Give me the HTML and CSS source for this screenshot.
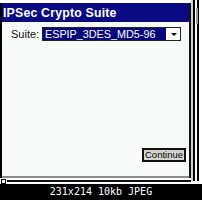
FILE: index.html
```html
<!DOCTYPE html>
<html>
<head>
<meta charset="utf-8">
<link rel="stylesheet" href="styles.css">
</head>
<body>
<div class="screen">
  <div class="top">
    <div class="left">
      <div class="dialog">
        <div class="title">IPSec Crypto Suite</div>
        <div class="content">
          <div class="row">
            <span class="label">Suite:</span>
            <div class="combo">
              <span class="sel">ESPIP_3DES_MD5-96</span>
              <span class="drop"><span class="arrow"></span></span>
            </div>
          </div>
          <div class="actions"><button class="btn">Continue</button></div>
        </div>
      </div>
      <div class="hbar"><span class="hbox"></span><span class="hline"></span></div>
    </div>
    <div class="scroll"><span class="thumb"></span></div>
  </div>
  <div class="caption">231x214 10kb JPEG</div>
</div>
</body>
</html>
```
FILE: styles.css
```css
html, body {
  margin: 0;
  padding: 0;
  background: #000;
}
.screen {
  width: 202px;
  height: 200px;
  display: flex;
  flex-direction: column;
  font-family: "Liberation Sans", Arial, sans-serif;
}
.top {
  height: 184px;
  display: flex;
  background: #fff;
}
.left {
  width: 191px;
  display: flex;
  flex-direction: column;
}
.dialog {
  margin-top: 3px;
  height: 175px;
  border-left: 2px solid #000;
  border-right: 2px solid #111;
  display: flex;
  flex-direction: column;
}
.title {
  height: 19px;
  background: #0a0a82;
  color: #fff;
  font-weight: bold;
  font-size: 12.3px;
  letter-spacing: 0.2px;
  line-height: 20px;
  padding-left: 1px;
  white-space: nowrap;
}
.content {
  flex: 1;
  background: #f7fbf7;
  border-bottom: 2px solid #8c8c8c;
  display: flex;
  flex-direction: column;
  justify-content: space-between;
}
.row {
  display: flex;
  align-items: center;
  margin-top: 5px;
  padding-left: 9px;
}
.label {
  font-size: 11px;
  color: #111;
  width: 31px;
}
.combo {
  width: 137px;
  height: 12px;
  border: 1px solid #222;
  background: #fff;
  display: flex;
}
.sel {
  width: 121px;
  background: #08087e;
  color: #fff;
  font-size: 10.8px;
  line-height: 13px;
  padding-left: 2px;
  white-space: nowrap;
  overflow: hidden;
}
.drop {
  flex: 1;
  display: flex;
  align-items: center;
  justify-content: center;
}
.arrow {
  width: 0;
  height: 0;
  border-left: 3px solid transparent;
  border-right: 3px solid transparent;
  border-top: 3px solid #000;
  margin-left: 1px;
}
.actions {
  display: flex;
  justify-content: flex-end;
  padding-right: 3px;
  margin-bottom: 14px;
}
.btn {
  width: 44px;
  height: 14px;
  padding: 0;
  margin: 0;
  border: 2px solid #111;
  background: #d4d4ce;
  font-family: "Liberation Sans", Arial, sans-serif;
  font-size: 9.5px;
  line-height: 10px;
  color: #000;
}
.hbar {
  flex: 1;
  display: flex;
  align-items: center;
}
.hbox {
  width: 3px;
  height: 3px;
  border: 1px solid #000;
  background: #fff;
  margin-left: 1px;
}
.hline {
  flex: 1;
  height: 2px;
  background: #111;
  margin-left: 1px;
}
.scroll {
  flex: 1;
  margin-bottom: 3px;
  background: linear-gradient(to right, #cfcfcf 0 2px, #000 2px 4px, #fff 4px 6px, #000 6px 8px, #fff 8px);
  display: flex;
}
.thumb {
  width: 2px;
  height: 16px;
  margin-top: 8px;
  margin-left: 5px;
  background: #9a9a9a;
}
.caption {
  flex: 1;
  background: #000;
  color: #fff;
  font-family: "DejaVu Sans Mono", monospace;
  font-size: 10px;
  line-height: 16px;
  text-align: center;
}
```
